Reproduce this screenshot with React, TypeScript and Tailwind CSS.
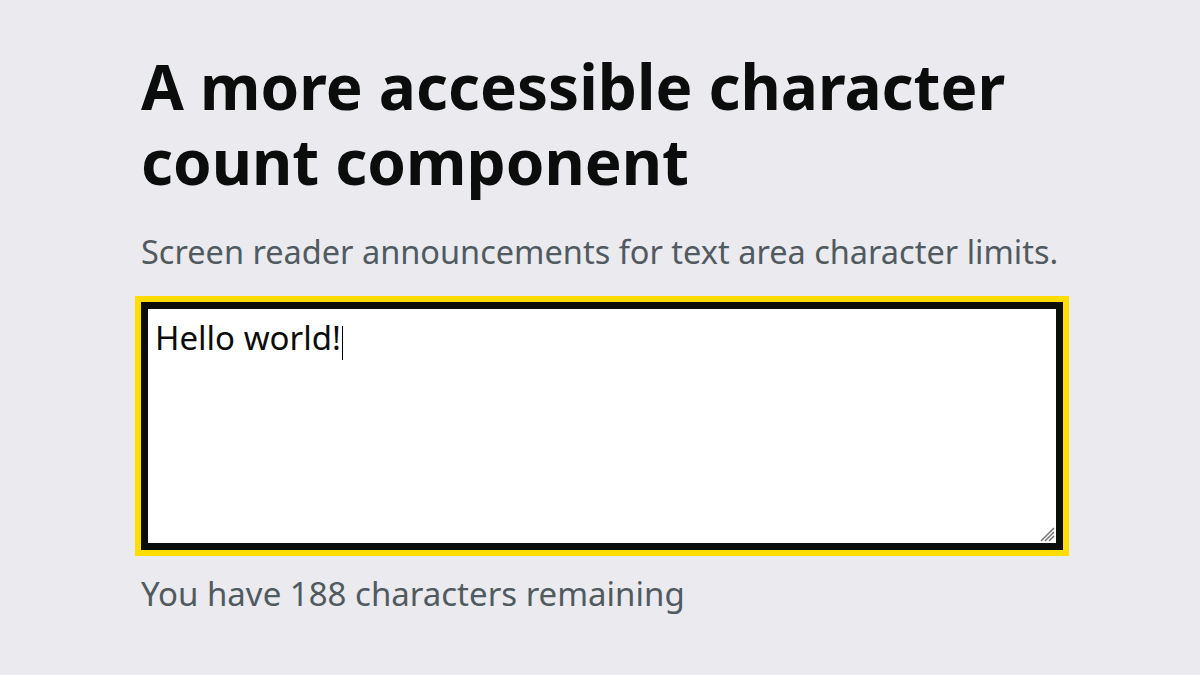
export default function App() {
  return (
    <div className="w-[1200px] h-[675px] overflow-hidden bg-[#eaeaef] pl-[141px] pt-[49px]" style={{ fontFamily: '"Noto Sans", Arial, sans-serif' }}>
      <h1 className="text-[62px] leading-[75px] font-bold text-[#0b0c0c]">
        A more accessible character
        <br />
        count component
      </h1>
      <p className="mt-[33px] text-[32.5px] leading-[40px] text-[#505a5f]">
        Screen reader announcements for text area character limits.
      </p>

      {/* textarea in focus state */}
      <div className="mt-[24px] ml-[-6px] w-[934px] h-[260px] border-[6px] border-[#ffdd00] bg-[#0b0c0c] p-[7px]">
        <div className="relative w-full h-full bg-white px-[7px] pt-[9px]">
          <span className="text-[33px] leading-[40px] text-[#0b0c0c]">Hello world!</span>
          <span className="inline-block w-[1.5px] h-[34px] bg-black align-middle ml-[1px] mt-[-6px]" />
          <svg className="absolute right-[1px] bottom-[1px]" width="18" height="18" viewBox="0 0 18 18">
            <path d="M17 4 L4 17 M17 8 L8 17 M17 12 L12 17" stroke="#777" strokeWidth="1.5" />
          </svg>
        </div>
      </div>

      <p className="mt-[18px] text-[33px] leading-[40px] text-[#505a5f]">You have 188 characters remaining</p>
    </div>
  );
}
